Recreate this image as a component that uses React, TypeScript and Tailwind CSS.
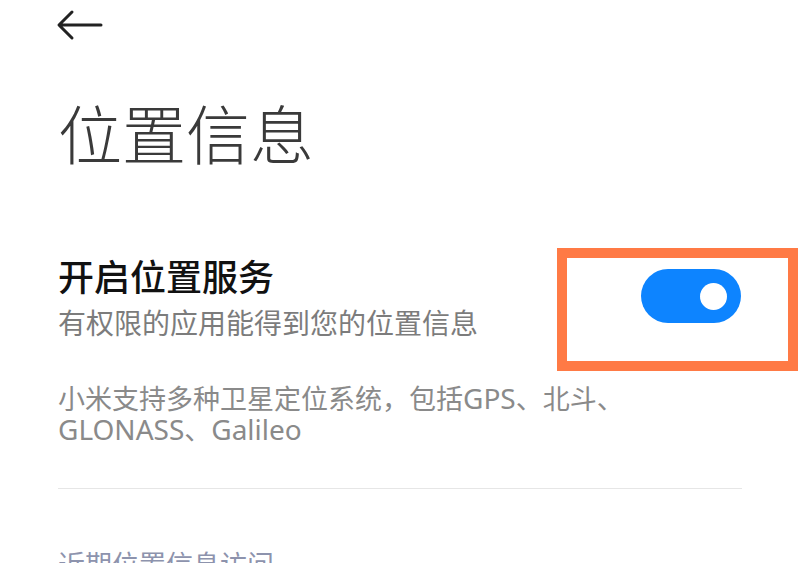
const Toggle = ({ on }: { on: boolean }) => (
  <div
    className={`mt-[9px] flex h-[54px] w-[100px] items-center rounded-full px-[14px] ${
      on ? "justify-end bg-[#0d84ff]" : "justify-start bg-[#e3e3e3]"
    }`}
  >
    <div className="h-[27px] w-[27px] rounded-full bg-white" />
  </div>
);

const App = () => {
  return (
    <div
      className="h-[563px] w-[800px] overflow-hidden bg-white"
      style={{ fontFamily: '"Noto Sans", "Noto Sans CJK SC", sans-serif' }}
    >
      <div className="px-[56px] pt-[8px]">
        <svg width="50" height="34" viewBox="0 0 50 34" fill="none">
          <path
            d="M45 17H4M16 4L3 17L16 30"
            stroke="#222"
            strokeWidth="3"
            strokeLinecap="round"
            strokeLinejoin="round"
          />
        </svg>
      </div>

      <h1 className="mt-[61px] pl-[58px] text-[64px] leading-none font-light text-[#3a3a3a]">
        位置信息
      </h1>

      <div className="relative mt-[93px] flex items-start justify-between pl-[58px] pr-[59px]">
        <div className="flex flex-col gap-[13px]">
          <div className="text-[36px] leading-none font-medium text-[#111]">
            开启位置服务
          </div>
          <div className="text-[28px] leading-none text-[#7c7c7c]">
            有权限的应用能得到您的位置信息
          </div>
        </div>
        <Toggle on />
        <div className="pointer-events-none absolute top-[-12px] right-[2px] h-[123px] w-[241px] border-[10px] border-[#ff7a45]" />
      </div>

      <p className="mt-[46px] px-[58px] text-[27px] leading-[31px] text-[#8a8a8a]">
        小米支持多种卫星定位系统，包括<span className="text-[28px]">GPS</span>、北斗、
        <br />
        <span className="text-[28px]">GLONASS</span>、<span className="text-[28px]">Galileo</span>
      </p>

      <div className="mx-[58px] mt-[43px] h-px bg-[#e6e6e6]" />

      <div className="mt-[62px] px-[58px] text-[27px] leading-none text-[#8d93ad]">
        近期位置信息访问
      </div>
    </div>
  );
};

export default App;
